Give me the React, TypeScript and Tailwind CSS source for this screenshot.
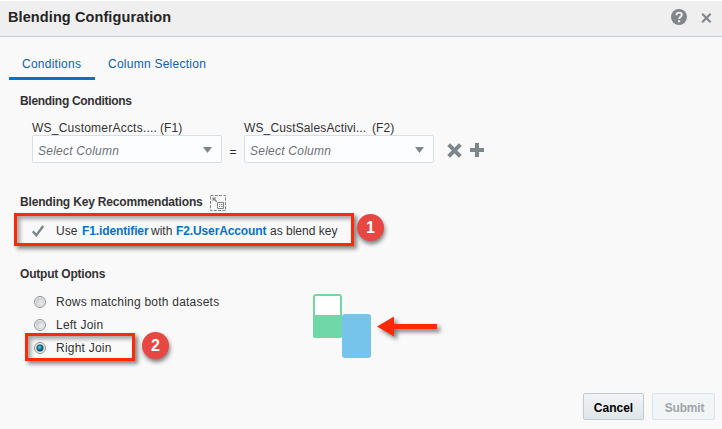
import type { ReactNode } from "react";

function Select({ label, file, tracking }: { label: string; file: string; tracking: string }) {
  return (
    <div className="w-[190px]">
      <div className="flex h-[15px] items-center pt-[2px] whitespace-pre leading-[15px]">
        <span className={`w-[128px] ${tracking}`}>{label}</span>
        <span className="tracking-[0.1px]">{file}</span>
      </div>
      <div className="flex h-7 items-center justify-between rounded-[2px] border border-[#d6dfe6] bg-[#fcfdfe] pr-[9px] pl-[5px]">
        <span className="pt-[3px] tracking-[0.24px] text-[#6d7175] italic">Select Column</span>
        <svg width="9" height="6" viewBox="0 0 9 6" className="mt-[2px]" fill="#7d868b">
          <path d="M0 0h9L4.5 6z" />
        </svg>
      </div>
    </div>
  );
}

function Radio({ label, checked = false }: { label: string; checked?: boolean }) {
  return (
    <div className="flex h-[23px] items-center">
      <svg width="12" height="12" viewBox="0 0 12 12" className="mr-[10px]">
        <defs>
          <linearGradient id="radioFace" x1="0" y1="0" x2="1" y2="1">
            <stop offset="0" stopColor="#c3c7cb" />
            <stop offset="1" stopColor="#f8f8f8" />
          </linearGradient>
          <radialGradient id="radioDot" cx="0.42" cy="0.38" r="0.7">
            <stop offset="0" stopColor="#5cd0f4" />
            <stop offset="0.5" stopColor="#137da5" />
            <stop offset="1" stopColor="#0b3850" />
          </radialGradient>
        </defs>
        <circle cx="6" cy="6" r="5.5" fill="#f6f6f6" stroke="#8e8f8f" />
        <circle cx="6" cy="6" r="3.9" fill="url(#radioFace)" stroke="#b9bdc1" strokeWidth="0.6" />
        {checked && <circle cx="6" cy="6" r="3.2" fill="url(#radioDot)" stroke="#123c52" strokeWidth="0.6" />}
      </svg>
      <span className="tracking-[0.22px]">{label}</span>
    </div>
  );
}

function Badge({ children, className }: { children: ReactNode; className: string }) {
  return (
    <div
      className={`absolute flex size-[27px] items-center justify-center rounded-full bg-[#e74742] text-[16px] font-bold text-white shadow-[1px_3px_4px_rgba(0,0,0,0.5)] ${className}`}
    >
      {children}
    </div>
  );
}

const frame =
  "pointer-events-none absolute border-3 border-[#fd2a05] shadow-[3px_3px_4px_rgba(0,0,0,0.45),inset_3px_3px_4px_rgba(0,0,0,0.35)]";

export default function App() {
  return (
    <div className="relative flex h-[429px] w-[722px] flex-col overflow-hidden bg-[#f9f9f9] font-['Liberation_Sans',Arial,sans-serif] text-[12px] leading-[16px] text-[#333]">
      <header className="flex h-[37px] items-center border-t border-b border-t-white border-b-[#b9cddb] bg-[#efefef] pr-[10px] pl-2">
        <h1 className="flex-1 pb-[3px] text-[14.5px] font-bold tracking-[0.1px] text-[#252525]">Blending Configuration</h1>
        <svg width="16" height="16" viewBox="0 0 16 16" className="mr-[14px] -mt-[4px]">
          <circle cx="8" cy="8" r="8" fill="#80878b" />
          <path d="M5.4 6.2C5.4 4.3 6.6 3.6 8.1 3.6c1.6 0 2.7.9 2.7 2.3 0 1.8-2.6 2-2.6 4" fill="none" stroke="#f5f5f5" strokeWidth="1.9" />
          <path d="M7.1 11.2h2.1v2H7.1z" fill="#f5f5f5" />
        </svg>
        <svg width="11" height="10" viewBox="0 0 11 10" className="-mt-[2px]">
          <path d="M1.200.8l8.4 8.4M9.600.8L1.200 9.200" stroke="#80878b" strokeWidth="2.2" />
        </svg>
      </header>

      <nav className="flex h-[43px] pl-[9px] text-[#0f60b5]">
        <div className="w-[86px] border-b-3 border-[#0572ce] pt-[19px] pl-[13px] tracking-[0.25px]">Conditions</div>
        <div className="pt-[19px] pl-[13px] tracking-[0.25px]">Column Selection</div>
      </nav>

      <main className="flex flex-1 flex-col">
        <section className="h-[114px] pt-[13px]">
          <h2 className="pl-5 font-bold tracking-[-0.3px]">Blending Conditions</h2>
          <div className="mt-[11px] flex pl-8">
            <Select label="WS_CustomerAccts...." file="(F1)" tracking="tracking-[0.22px]" />
            <span className="w-[22px] pt-[24px] text-center">=</span>
            <Select label="WS_CustSalesActivi..." file="(F2)" tracking="tracking-[0.14px]" />
            <div className="flex gap-[8px] pt-[23px] pl-[13px]">
              <svg width="15" height="15" viewBox="0 0 15 15">
                <path d="M1.700 1.700l11.600 11.600M13.300 1.700L1.700 13.300" stroke="#7d868a" strokeWidth="4" />
              </svg>
              <svg width="14" height="14" viewBox="0 0 14 14">
                <path d="M0 7h14M7 0v14" stroke="#7d868a" strokeWidth="4" />
              </svg>
            </div>
          </div>
        </section>

        <section className="relative h-[71px]">
          <div className="flex h-[17px] items-start pl-5">
            <h2 className="w-[190px] font-bold tracking-[-0.17px]">Blending Key Recommendations</h2>
            <svg width="16" height="16" viewBox="0 0 16 16" fill="none" stroke="#858585" className="mt-px">
              <path d="M.5 .5h15v15H.5z" strokeDasharray="3 1.300" />
              <path d="M3.500 3.500L6.800 6.800" strokeWidth="1.500" />
              <path d="M2.500 2.500h4l-4 4z" fill="#858585" stroke="none" />
              <path d="M7.500 7.500h6v6h-6zM9 9.500h1M10.800 9.500h1.700M9 11.500h1M10.800 11.500h1.700" />
            </svg>
          </div>
          <div className="flex pt-[12px] pl-8">
            <svg width="12" height="12" viewBox="0 0 12 12" className="mt-[2px] mr-[12px]">
              <path d="M.8 6.300l3.500 3.900L11.200 1" fill="none" stroke="#7d868a" strokeWidth="2.400" />
            </svg>
            <p className="flex h-4 whitespace-pre">
              <span className="w-[26px] tracking-[0.1px]">Use</span>
              <b className="w-[69px] tracking-[-0.12px] text-[#0572ce]">F1.identifier</b>
              <span className="w-[25px]">with</span>
              <b className="w-[94px] tracking-[-0.12px] text-[#0572ce]">F2.UserAccount</b>
              <span>as blend key</span>
            </p>
          </div>
          <div className={`${frame} top-[19px] left-[14px] h-[33px] w-[340px]`} />
          <Badge className="top-[20px] left-[357px]">1</Badge>
        </section>

        <section className="relative flex h-[128px]">
          <div className="w-[313px]">
            <h2 className="pt-px pl-5 font-bold tracking-[-0.2px]">Output Options</h2>
            <div className="pt-[8px] pl-[34px]">
              <Radio label="Rows matching both datasets" />
              <Radio label="Left Join" />
              <Radio label="Right Join" checked />
            </div>
          </div>
          <svg width="140" height="74" viewBox="0 0 140 74" className="mt-[29px]">
            <rect x="1" y="1" width="27" height="42" rx="2" fill="#fff" stroke="#70d8a8" strokeWidth="2" />
            <path d="M0 21h29v21q0 2-2 2H2q-2 0-2-2z" fill="#70d8a8" />
            <rect x="29" y="20" width="29" height="44" rx="3" fill="#76c3ec" />
            <path
              d="M64 32.500L81 22.500v7.500h43v5H81V42.500z"
              fill="#fd2a05"
              className="drop-shadow-[3px_3px_2px_rgba(0,0,0,0.5)]"
            />
          </svg>
          <div className={`${frame} top-[68px] left-[25px] h-[28px] w-[110px]`} />
          <Badge className="top-[67px] left-[142px]">2</Badge>
        </section>

        <footer className="flex justify-end gap-2 pr-[7px] font-bold">
          <button className="h-[27px] w-[61px] rounded-[2px] border border-[#bfcbd2] bg-linear-to-b from-[#f1f4f6] to-[#dfe5e8] pt-[2px] text-black">
            Cancel
          </button>
          <button className="h-[27px] w-[63px] rounded-[2px] border border-[#dbe4e8] bg-[#f2f5f6] pt-[2px] pl-[2px] tracking-[-0.2px] text-[#a0a5a8]">
            Submit
          </button>
        </footer>
      </main>
    </div>
  );
}
